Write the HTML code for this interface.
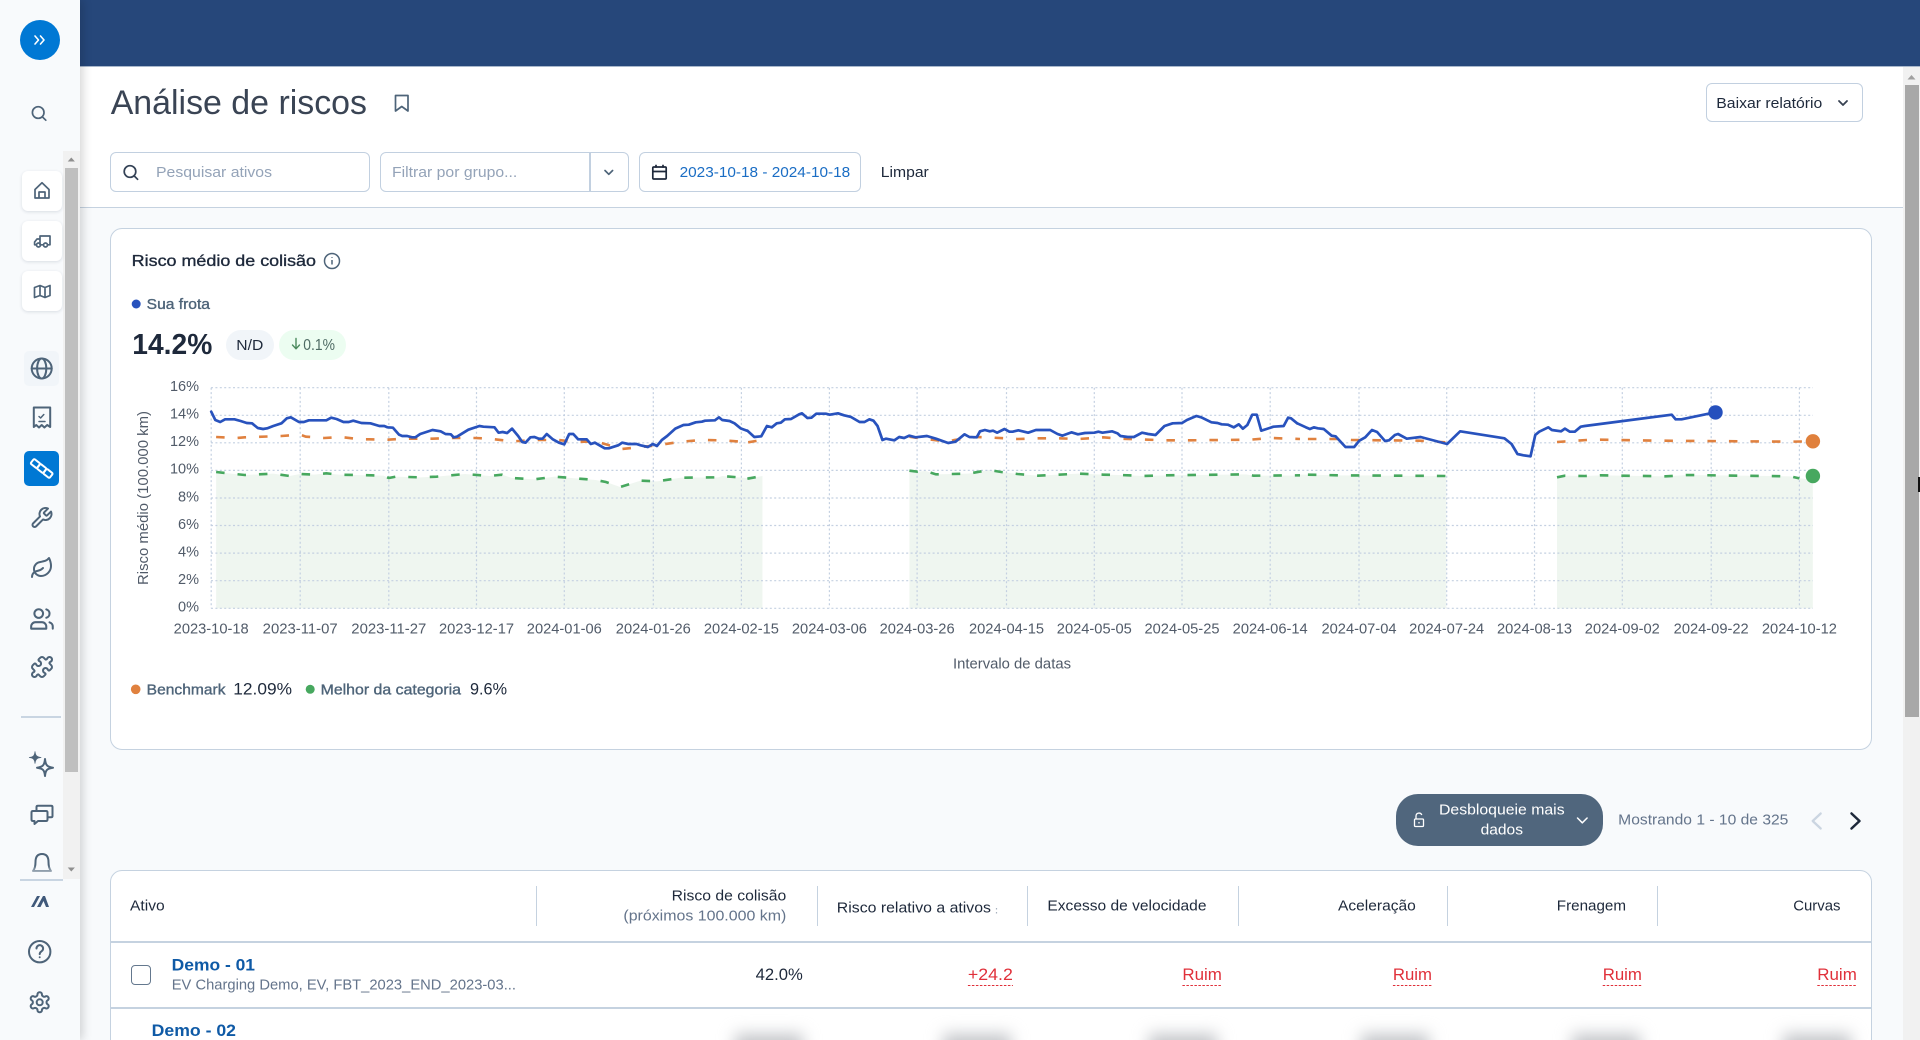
<!DOCTYPE html>
<html lang="pt"><head><meta charset="utf-8"><title>Análise de riscos</title>
<style>
html,body{margin:0;padding:0;width:1920px;height:1040px;overflow:hidden;background:#f8fafc;font-family:"Liberation Sans",sans-serif}
#w{position:relative;width:1920px;height:1040px;overflow:hidden;background:#f8fafc}
.b{position:absolute;box-sizing:border-box}
svg{position:absolute;left:0;top:0}
text{font-family:"Liberation Sans",sans-serif;font-size:15px;fill:#1e293b}
.m{stroke:currentColor;stroke-width:.35px}
.s{fill:none;stroke:#4e6479;stroke-width:1.7;stroke-linecap:round;stroke-linejoin:round}
.z{vector-effect:non-scaling-stroke}
.ax{font-size:14.5px;fill:#515b69}
.lb{fill:#64748b}
.r{fill:#e0303a;font-size:17px}
.g{fill:none;stroke:#c4d0e1;stroke-width:1.2;stroke-dasharray:2 2.4}
.bl{fill:none;stroke:#2852bd;stroke-width:2.7;stroke-linejoin:round;stroke-linecap:round}
.or{fill:none;stroke:#e0813f;stroke-width:2.6;stroke-dasharray:8.5 13}
.gr{fill:none;stroke:#47a85f;stroke-width:2.6;stroke-dasharray:8.5 13}
.fl{fill:#eff6f0;stroke:none}
</style></head><body>
<div id="w">
<div class="b" style="left:80px;top:0;width:1840px;height:67px;background:#26477a;border-bottom:1px solid #a9b8cc"></div>
<div class="b" style="left:80px;top:67px;width:1824px;height:141px;background:#fff;border-bottom:1.5px solid #c5d2e0"></div>
<div class="b" style="left:1903px;top:67px;width:17px;height:973px;background:#f1f1f1"></div>
<div class="b" style="left:1905px;top:85px;width:13.5px;height:632px;background:#a8a8a8"></div>
<div class="b" style="left:1918px;top:477px;width:2px;height:15px;background:#111"></div>
<div class="b" style="left:110px;top:152px;width:260px;height:40px;background:#fff;border:1.5px solid #c2d0e0;border-radius:6px"></div>
<div class="b" style="left:380px;top:152px;width:249px;height:40px;background:#fff;border:1.5px solid #c2d0e0;border-radius:6px"></div>
<div class="b" style="left:589px;top:153px;width:1.5px;height:38px;background:#c2d0e0"></div>
<div class="b" style="left:639px;top:152px;width:222px;height:40px;background:#fff;border:1.5px solid #c2d0e0;border-radius:6px"></div>
<div class="b" style="left:1706px;top:83px;width:157px;height:39px;background:#fff;border:1.5px solid #c2d0e0;border-radius:6px"></div>
<div class="b" style="left:110px;top:228px;width:1762px;height:522px;background:#fff;border:1.5px solid #c5d2e0;border-radius:12px"></div>
<div class="b" style="left:226px;top:330px;width:48px;height:30px;background:#f1f5f9;border-radius:15px"></div>
<div class="b" style="left:279px;top:330px;width:67px;height:30px;background:#ecfdf1;border-radius:15px"></div>
<div class="b" style="left:1396px;top:794px;width:207px;height:52px;background:#50667d;border-radius:22px"></div>
<div class="b" style="left:110px;top:870px;width:1762px;height:200px;background:#fff;border:1.5px solid #c5d2e0;border-radius:12px"></div>
<div class="b" style="left:111px;top:941px;width:1760px;height:1.5px;background:#c5d2e0"></div>
<div class="b" style="left:111px;top:1007px;width:1760px;height:1.5px;background:#c5d2e0"></div>
<div class="b" style="left:536px;top:886px;width:1px;height:40px;background:#c5d2e0"></div>
<div class="b" style="left:817px;top:886px;width:1px;height:40px;background:#c5d2e0"></div>
<div class="b" style="left:1027px;top:886px;width:1px;height:40px;background:#c5d2e0"></div>
<div class="b" style="left:1238px;top:886px;width:1px;height:40px;background:#c5d2e0"></div>
<div class="b" style="left:1447px;top:886px;width:1px;height:40px;background:#c5d2e0"></div>
<div class="b" style="left:1657px;top:886px;width:1px;height:40px;background:#c5d2e0"></div>
<div class="b" style="left:131px;top:965px;width:20px;height:20px;background:#fff;border:1.2px solid #64788e;border-radius:4px"></div>
<div class="b" style="left:735px;top:1034px;width:68px;height:30px;background:#c3c5c9;filter:blur(8px)"></div>
<div class="b" style="left:943px;top:1034px;width:68px;height:30px;background:#c3c5c9;filter:blur(8px)"></div>
<div class="b" style="left:1149px;top:1034px;width:68px;height:30px;background:#c3c5c9;filter:blur(8px)"></div>
<div class="b" style="left:1361px;top:1034px;width:68px;height:30px;background:#c3c5c9;filter:blur(8px)"></div>
<div class="b" style="left:1572px;top:1034px;width:68px;height:30px;background:#c3c5c9;filter:blur(8px)"></div>
<div class="b" style="left:1783px;top:1034px;width:68px;height:30px;background:#c3c5c9;filter:blur(8px)"></div>

<div class="b" style="left:0;top:0;width:80px;height:1040px;background:#f8fafc;box-shadow:3px 0 9px rgba(0,0,0,.16)"></div>
<div class="b" style="left:63px;top:151px;width:17px;height:728px;background:#f1f1f1"></div>
<div class="b" style="left:65px;top:168px;width:13px;height:604px;background:#bfbfbf"></div>
<div class="b" style="left:22px;top:171px;width:40px;height:40px;background:#fff;border-radius:6px;box-shadow:0 1px 3px rgba(30,50,80,.14)"></div>
<div class="b" style="left:22px;top:221px;width:40px;height:40px;background:#fff;border-radius:6px;box-shadow:0 1px 3px rgba(30,50,80,.14)"></div>
<div class="b" style="left:22px;top:271px;width:40px;height:40px;background:#fff;border-radius:6px;box-shadow:0 1px 3px rgba(30,50,80,.14)"></div>
<div class="b" style="left:24px;top:351px;width:35px;height:35px;background:#f1f5f9;border-radius:5px"></div>
<div class="b" style="left:24px;top:451px;width:35px;height:35px;background:#0078d4;border-radius:5px"></div>
<div class="b" style="left:21px;top:716px;width:40px;height:1.5px;background:#c9d5e2"></div>
<div class="b" style="left:20px;top:879px;width:43px;height:1.5px;background:#c9d5e2"></div>

<svg width="1920" height="1040" viewBox="0 0 1920 1040" xmlns="http://www.w3.org/2000/svg">
<defs><linearGradient id="f" x1="0" y1="0" x2="0" y2="1"><stop offset="0" stop-color="#f8fafc" stop-opacity="0"/><stop offset="1" stop-color="#f8fafc"/></linearGradient></defs>

<!-- sidebar -->
<circle cx="40" cy="40" r="20" fill="#0078d4"/>
<path d="M35 36l3.5 4-3.5 4M40.5 36l3.500 4-3.500 4" fill="none" stroke="#fff" stroke-width="1.600" stroke-linecap="round" stroke-linejoin="round"/>
<g class="s"><circle cx="38.200" cy="112.500" r="5.800"/><path d="M42.500 117l3.300 3.200"/></g>
<path d="M71.300 157.500l3.600 4h-7.200zM71.300 871.500l3.600-4h-7.200z" fill="#8f8f8f"/>
<g class="s">
<path d="M35 189.500L42 182.800l7 6.700V198H35zM39 198v-6h6v6"/>
<path d="M40 236h10v8.800h-2M43 244.800h-1.500M40 236v8.800M40 239h-3l-2.400 3v2.800H36"/><circle cx="38.500" cy="245" r="2"/><circle cx="45.500" cy="245" r="2"/>
<path d="M34.500 287.500l5.500-2 5 2 5-2v10l-5 2-5-2-5.500 2zM40 285.500v10M45 287.500v10"/>
</g>
<g class="s" style="stroke-width:2">
<circle cx="41.700" cy="368.500" r="10"/><ellipse cx="41.700" cy="368.500" rx="4.600" ry="10"/><path d="M31.700 368.500h20"/>
<path d="M33.800 407.500h16.400V427l-3-2-2.800 2.500-2.700-2.500-2.700 2.500-2.800-2.500-2.400 2z"/>
<path d="M39 416.500l1.600 1.500 3.200-3.500M39 421.500h6" style="stroke-width:1.500"/>
<g transform="translate(29.500 506)"><path d="M14.700 6.300a1 1 0 0 0 0 1.400l1.600 1.600a1 1 0 0 0 1.400 0l3.770-3.770a6 6 0 0 1-7.940 7.940l-6.910 6.910a2.120 2.120 0 0 1-3-3l6.910-6.910a6 6 0 0 1 7.940-7.940l-3.760 3.760z"/></g>
<g transform="translate(30 556)"><path d="M11 20A7 7 0 0 1 9.800 6.100C15.500 5 17 4.480 19 2c1 2 2 4.180 2 8 0 5.500-4.780 10-10 10Z"/><path d="M2 21c0-3 1.850-5.360 5.080-6C9.500 14.520 12 13 13 12"/></g>
<g transform="translate(29 606) scale(1.08)" style="stroke-width:1.900"><path d="M16 21v-2a4 4 0 0 0-4-4H6a4 4 0 0 0-4 4v2H16"/><circle cx="9" cy="7" r="4"/><path d="M22 21v-2a4 4 0 0 0-3-3.870"/><path d="M16 3.130a4 4 0 0 1 0 7.750"/></g>
<g transform="translate(30 655)"><path d="M19.439 7.850c-.049.322.059.648.289.878l1.568 1.568c.47.47.706 1.087.706 1.704s-.235 1.233-.706 1.704l-1.611 1.611a.98.98 0 0 1-.837.276c-.47-.07-.802-.48-.968-.925a2.501 2.501 0 1 0-3.214 3.214c.446.166.855.497.925.968a.979.979 0 0 1-.276.837l-1.610 1.610a2.404 2.404 0 0 1-1.705.707 2.402 2.402 0 0 1-1.704-.706l-1.568-1.568a1.026 1.026 0 0 0-.877-.29c-.493.074-.84.504-1.020.968a2.500 2.500 0 1 1-3.237-3.237c.464-.18.894-.527.967-1.020a1.026 1.026 0 0 0-.289-.877l-1.568-1.568A2.402 2.402 0 0 1 1.998 12c0-.617.236-1.234.706-1.704L4.230 8.770c.24-.24.581-.353.917-.303.515.077.877.528 1.073 1.010a2.500 2.500 0 1 0 3.259-3.259c-.482-.196-.933-.558-1.010-1.073-.05-.336.062-.676.303-.917l1.525-1.525A2.402 2.402 0 0 1 12 1.998c.617 0 1.234.236 1.704.706l1.568 1.568c.23.23.556.338.877.29.493-.074.84-.504 1.020-.968a2.500 2.500 0 1 1 3.237 3.237c-.464.18-.894.527-.967 1.020Z"/></g>
<path d="M45 759C45.500 765 47 767 53 767.700 47 768.500 45.500 770 45 776 44.500 770 43 768.500 37 767.700 43 767 44.500 765 45 759Z"/>
<path d="M33 811h13q1.500 0 1.500 1.500v7q0 1.500-1.500 1.500h-8l-3.500 3v-3H33q-1.500 0-1.500-1.500v-7q0-1.500 1.500-1.500z"/>
<path d="M36.500 811v-4q0-1.200 1.500-1.200h13q1.500 0 1.500 1.200v9q0 1.300-1.500 1.300h-3.500"/>
<path d="M33 871q2.500-3 2.500-9 0-8 6.500-8t6.500 8q0 6 2.500 9z"/>
<circle cx="39.700" cy="951.700" r="10.700"/>
<path d="M36.500 948.500a3.300 3.300 0 1 1 5 2.800c-1.200.8-1.800 1.400-1.800 2.800M39.700 957.200v.1"/>
<g transform="translate(27.700 990.300)"><path d="M12.220 2h-.44a2 2 0 0 0-2 2v.18a2 2 0 0 1-1 1.730l-.43.25a2 2 0 0 1-2 0l-.15-.08a2 2 0 0 0-2.730.73l-.22.38a2 2 0 0 0 .73 2.730l.15.1a2 2 0 0 1 1 1.720v.51a2 2 0 0 1-1 1.740l-.15.09a2 2 0 0 0-.73 2.730l.22.38a2 2 0 0 0 2.730.73l.15-.08a2 2 0 0 1 2 0l.43.25a2 2 0 0 1 1 1.730V20a2 2 0 0 0 2 2h.44a2 2 0 0 0 2-2v-.18a2 2 0 0 1 1-1.730l.43-.25a2 2 0 0 1 2 0l.15.08a2 2 0 0 0 2.730-.73l.22-.39a2 2 0 0 0-.73-2.730l-.15-.08a2 2 0 0 1-1-1.740v-.5a2 2 0 0 1 1-1.740l.15-.09a2 2 0 0 0 .73-2.730l-.22-.38a2 2 0 0 0-2.730-.73l-.15.08a2 2 0 0 1-2 0l-.43-.25a2 2 0 0 1-1-1.730V4a2 2 0 0 0-2-2z"/><circle cx="12" cy="12" r="3"/></g>
</g>
<path d="M35 751.700C35.400 755.500 36.500 757 41 757.500 36.500 758 35.400 759.500 35 763.300 34.600 759.500 33.500 758 29.300 757.500 33.500 757 34.600 755.500 35 751.700Z" fill="#4e6479" stroke="#4e6479" stroke-width=".8" stroke-linejoin="round"/>
<g transform="translate(41.700 468.500) rotate(38)" fill="none" stroke="#fff" stroke-width="2" stroke-linejoin="round"><rect x="-12" y="-3" width="8" height="6" rx="1.200"/><rect x="-4" y="-3" width="8" height="6" rx="1.200"/><rect x="4" y="-3" width="8" height="6" rx="1.200"/></g>
<path d="M31 907l6-11h3l-6 11zM37 907l6-11h2l4 11h-3l-2.500-6-3 6z" fill="#40597a"/>
<rect x="20" y="865" width="43" height="14" fill="url(#f)"/>

<!-- header -->
<text x="110.700" y="114" textLength="256.300" lengthAdjust="spacingAndGlyphs" style="font-size:34px;fill:#3a4454">Análise de riscos</text>
<path d="M395.500 95.500h12.500v15.500l-6.250-4.500-6.250 4.500z" class="s"/>
<text x="1716.300" y="108" textLength="106" lengthAdjust="spacingAndGlyphs" style="font-size:15px">Baixar relatório</text>
<path d="M1839 101l4 4 4-4" fill="none" stroke="#374151" stroke-width="1.800" stroke-linecap="round" stroke-linejoin="round"/>
<path d="M1907.500 79.500l4-4.500 4 4.500z" fill="#a0a0a0"/>
<g class="s" style="stroke:#334155"><circle cx="130" cy="171.500" r="5.800"/><path d="M134.300 176l3.300 3.300"/></g>
<text x="156" y="176.800" textLength="116" lengthAdjust="spacingAndGlyphs" style="fill:#94a3b8">Pesquisar ativos</text>
<text x="392" y="176.800" textLength="125.300" lengthAdjust="spacingAndGlyphs" style="fill:#94a3b8">Filtrar por grupo...</text>
<path d="M605 170.500l3.800 3.800 3.800-3.800" fill="none" stroke="#4e6479" stroke-width="1.700" stroke-linecap="round" stroke-linejoin="round"/>
<g fill="none" stroke="#1e293b" stroke-width="1.700"><rect x="652.800" y="167" width="13.400" height="12" rx="1"/><path d="M652.800 171.500h13.400M656 164.800v3M663 164.800v3"/></g>
<text x="679.600" y="176.800" textLength="170.600" lengthAdjust="spacingAndGlyphs" style="fill:#1a6dc4">2023-10-18 - 2024-10-18</text>
<text x="880.800" y="176.800" textLength="48" lengthAdjust="spacingAndGlyphs">Limpar</text>

<!-- card title -->
<text x="131.700" y="266.200" textLength="184.300" lengthAdjust="spacingAndGlyphs" class="m" style="font-size:16px;color:#1e293b">Risco médio de colisão</text>
<g fill="none" stroke="#4e6479" stroke-width="1.500"><circle cx="332" cy="261" r="7.500"/><path d="M332 260v4.500M332 257.200v.8"/></g>
<circle cx="136.200" cy="304" r="4.500" fill="#2852bd"/>
<text x="146.700" y="308.800" textLength="63.300" lengthAdjust="spacingAndGlyphs" class="m" style="font-size:14.500px;fill:#4e6479;color:#4e6479">Sua frota</text>
<text x="132.300" y="354" textLength="80" lengthAdjust="spacingAndGlyphs" style="font-size:29px;font-weight:bold;fill:#1e293b">14.2%</text>
<text x="236.300" y="350" textLength="27" lengthAdjust="spacingAndGlyphs" style="font-size:15px">N/D</text>
<path d="M296 338.500v10M292.500 345l3.500 3.800 3.500-3.800" fill="none" stroke="#4b8a5d" stroke-width="1.400" stroke-linecap="round" stroke-linejoin="round"/>
<text x="303.300" y="350" textLength="31.700" lengthAdjust="spacingAndGlyphs" style="font-size:16px;fill:#4e6b64">0.1%</text>

<!-- fill -->
<g transform="translate(110 360) scale(.40816 .33333)">
<polygon class="fl" points="260,745 260,336 290,340 330,345 400,341 440,348 466,342 500,344 530,340 560,344 640,346 670,347 683,354 700,350 760,352 800,350 870,342 930,348 960,344 985,354 1040,358 1090,350 1130,354 1190,360 1215,366 1250,381 1300,362 1340,364 1400,353 1490,352 1500,348 1568,355 1568,745"/>
</g>
<g transform="translate(740 370) scale(.40816 .33333)">
<polygon class="fl" points="0,715 0,324 18,326 55,318 55,715"/>
<polygon class="fl" points="415,715 415,302 435,305 455,303 480,313 560,311 610,300 640,306 680,312 730,317 830,311 890,314 930,315 990,318 1040,316 1240,313 1258,317 1568,316 1568,715"/>
</g>
<g transform="translate(1300 370) scale(.39541 .33333)">
<polygon class="fl" points="0,715 0,314 20,314 100,316 370,318 370,715"/>
<polygon class="fl" points="650,715 650,322 670,317 720,318 760,316 925,319 980,315 1240,319 1263,325 1297,328 1297,715"/>
</g>

<!-- grid -->
<g class="g">
<path d="M211 387.700H1813M211 415.300H1813M211 442.800H1813M211 470.400H1813M211 498H1813M211 525.500H1813M211 553.100H1813M211 580.700H1813M211 608.300H1813"/>
<path d="M211.200 387.700V608.300M300.200 387.700V608.300M388.800 387.700V608.300M476.500 387.700V608.300M564.300 387.700V608.300M653.300 387.700V608.300M741.400 387.700V608.300M829.400 387.700V608.300M917.100 387.700V608.300M1006.500 387.700V608.300M1094.300 387.700V608.300M1182 387.700V608.300M1270.200 387.700V608.300M1359 387.700V608.300M1446.700 387.700V608.300M1534.500 387.700V608.300M1622.300 387.700V608.300M1711.200 387.700V608.300M1799.400 387.700V608.300"/>
</g>

<!-- axis labels -->
<g class="ax" text-anchor="end">
<text class="ax" x="199" y="391">16%</text><text class="ax" x="199" y="418.600">14%</text><text class="ax" x="199" y="446.100">12%</text><text class="ax" x="199" y="473.700">10%</text><text class="ax" x="199" y="501.300">8%</text><text class="ax" x="199" y="528.800">6%</text><text class="ax" x="199" y="556.400">4%</text><text class="ax" x="199" y="584">2%</text><text class="ax" x="199" y="611.500">0%</text>
</g>
<text class="ax" transform="translate(148 585) rotate(-90)" x="0" y="0" textLength="174" lengthAdjust="spacingAndGlyphs">Risco médio (100.000 km)</text>
<g text-anchor="middle">
<text class="ax" x="211.200" y="633.300" textLength="75" lengthAdjust="spacingAndGlyphs">2023-10-18</text>
<text class="ax" x="300.200" y="633.300" textLength="75" lengthAdjust="spacingAndGlyphs">2023-11-07</text>
<text class="ax" x="388.800" y="633.300" textLength="75" lengthAdjust="spacingAndGlyphs">2023-11-27</text>
<text class="ax" x="476.500" y="633.300" textLength="75" lengthAdjust="spacingAndGlyphs">2023-12-17</text>
<text class="ax" x="564.300" y="633.300" textLength="75" lengthAdjust="spacingAndGlyphs">2024-01-06</text>
<text class="ax" x="653.300" y="633.300" textLength="75" lengthAdjust="spacingAndGlyphs">2024-01-26</text>
<text class="ax" x="741.400" y="633.300" textLength="75" lengthAdjust="spacingAndGlyphs">2024-02-15</text>
<text class="ax" x="829.400" y="633.300" textLength="75" lengthAdjust="spacingAndGlyphs">2024-03-06</text>
<text class="ax" x="917.100" y="633.300" textLength="75" lengthAdjust="spacingAndGlyphs">2024-03-26</text>
<text class="ax" x="1006.500" y="633.300" textLength="75" lengthAdjust="spacingAndGlyphs">2024-04-15</text>
<text class="ax" x="1094.300" y="633.300" textLength="75" lengthAdjust="spacingAndGlyphs">2024-05-05</text>
<text class="ax" x="1182" y="633.300" textLength="75" lengthAdjust="spacingAndGlyphs">2024-05-25</text>
<text class="ax" x="1270.200" y="633.300" textLength="75" lengthAdjust="spacingAndGlyphs">2024-06-14</text>
<text class="ax" x="1359" y="633.300" textLength="75" lengthAdjust="spacingAndGlyphs">2024-07-04</text>
<text class="ax" x="1446.700" y="633.300" textLength="75" lengthAdjust="spacingAndGlyphs">2024-07-24</text>
<text class="ax" x="1534.500" y="633.300" textLength="75" lengthAdjust="spacingAndGlyphs">2024-08-13</text>
<text class="ax" x="1622.300" y="633.300" textLength="75" lengthAdjust="spacingAndGlyphs">2024-09-02</text>
<text class="ax" x="1711.200" y="633.300" textLength="75" lengthAdjust="spacingAndGlyphs">2024-09-22</text>
<text class="ax" x="1799.400" y="633.300" textLength="75" lengthAdjust="spacingAndGlyphs">2024-10-12</text>
<text class="ax" x="1012" y="668.500" textLength="118" lengthAdjust="spacingAndGlyphs">Intervalo de datas</text>
</g>

<!-- series: segments in crop coordinates -->
<g transform="translate(110 360) scale(.40816 .33333)" fill="none">
<polyline class="z gr" points="260,336 290,340 330,345 400,341 440,348 466,342 500,344 530,340 560,344 640,346 670,347 683,354 700,350 760,352 800,350 870,342 930,348 960,344 985,354 1040,358 1090,350 1130,354 1190,360 1215,366 1250,381 1300,362 1340,364 1400,353 1490,352 1500,348 1568,355"/>
<polyline class="z or" points="260,231 310,234 330,232 420,228 466,224 480,230 525,234 565,231 615,238 635,238 680,239 725,236 790,236 835,234 895,234 930,236 985,244 1050,240 1100,240 1140,246 1190,244 1255,267 1300,261 1340,256 1400,245 1450,240 1500,241 1568,247"/>
<polyline class="z bl" points="248,155 258,180 270,186 282,178 305,178 320,183 335,189 348,190 362,204 375,207 385,205 400,198 420,190 433,175 443,172 463,186 475,186 487,181 530,181 542,173 555,177 572,186 585,186 596,182 616,189 638,190 660,198 672,198 680,202 693,203 708,224 716,228 728,228 740,232 748,232 760,222 775,216 790,210 810,214 822,222 835,223 842,232 850,230 878,209 905,198 915,200 942,202 952,218 962,216 973,219 985,206 1000,228 1010,246 1018,248 1030,232 1040,231 1050,236 1060,236 1070,222 1085,238 1100,248 1113,253 1125,222 1135,222 1147,238 1168,238 1178,252 1188,248 1212,265 1222,265 1245,256 1255,248 1270,252 1290,252 1300,256 1318,261 1330,252 1340,258 1352,240 1365,228 1385,206 1405,195 1418,194 1435,187 1450,185 1458,182 1482,181 1492,172 1500,180 1518,183 1530,190 1545,205 1560,212"/>
</g>
<g transform="translate(740 370) scale(.40816 .33333)" fill="none">
<polyline class="z gr" points="18,326 55,318"/>
<polyline class="z gr" points="415,302 435,305 455,303 480,313 560,311 610,300 640,306 680,312 730,317 830,311 890,314 930,315 990,318 1040,316 1240,313 1258,317 1372,316"/>
<polyline class="z or" points="20,217 53,210"/>
<polyline class="z or" points="415,200 435,204 510,215 525,210 580,201 620,203 680,207 730,205 780,205 830,207 890,202 930,206 980,208 1040,211 1100,211 1250,209 1300,204 1372,207"/>
<polyline class="z bl" points="18,182 35,201 52,199 66,168 78,172 90,160 100,158 110,148 125,147 145,133 152,130 165,144 175,143 187,131 210,131 220,134 240,130 255,136 272,141 293,156 305,156 317,148 327,152 337,168 349,210 358,206 378,211 390,201 402,204 415,197 430,202 458,198 480,206 510,219 528,215 550,193 562,201 580,202 588,184 600,180 612,184 620,182 630,188 648,177 660,185 668,185 682,181 706,188 725,180 760,180 778,192 790,197 812,187 828,193 845,189 868,188 878,185 888,188 912,184 925,190 932,198 950,201 965,201 985,188 1000,192 1018,195 1040,168 1060,160 1083,159 1095,150 1118,138 1130,142 1155,157 1170,159 1180,163 1195,164 1210,172 1222,163 1232,176 1243,165 1255,134 1266,134 1277,182 1290,177 1307,170 1332,168 1343,143 1350,145 1365,160"/>
</g>
<g transform="translate(1300 370) scale(.39541 .33333)" fill="none">
<polyline class="z gr" points="20,314 100,316 370,318"/>
<polyline class="z gr" points="650,322 670,317 720,318 760,316 925,319 980,315 1240,319 1263,325"/>
<polyline class="z or" points="20,207 100,207 130,210 300,212 370,217"/>
<polyline class="z or" points="650,216 725,210 760,209 900,212 1240,215 1297,214"/>
<polyline class="z bl" points="-7,160 15,172 25,177 35,172 45,175 60,177 80,197 90,199 115,231 137,231 150,212 165,202 182,180 195,186 215,213 225,211 240,195 248,192 270,206 305,201 372,222 405,184 517,205 535,222 550,252 565,256 583,259 595,195 605,185 628,172 637,180 660,184 670,176 682,185 695,185 710,170 720,168 940,134 950,148 965,148 1050,127"/>
</g>
<circle cx="1715.500" cy="412.400" r="7.200" fill="#2550bd"/>
<circle cx="1812.900" cy="441.300" r="7.200" fill="#e0803c"/>
<circle cx="1812.900" cy="476" r="7.200" fill="#47a85f"/>

<!-- legend -->
<circle cx="135.700" cy="689.300" r="4.800" fill="#e0813f"/>
<text x="146.700" y="694.500" textLength="78.800" lengthAdjust="spacingAndGlyphs" class="m" style="font-size:14.500px;fill:#4e6479;color:#4e6479">Benchmark</text>
<text x="233.300" y="694.500" textLength="58.700" lengthAdjust="spacingAndGlyphs" style="font-size:16.500px">12.09%</text>
<circle cx="310.200" cy="689.300" r="4.500" fill="#47a85f"/>
<text x="320.600" y="694.500" textLength="140.400" lengthAdjust="spacingAndGlyphs" class="m" style="font-size:14.500px;fill:#4e6479;color:#4e6479">Melhor da categoria</text>
<text x="470" y="694.500" textLength="37" lengthAdjust="spacingAndGlyphs" style="font-size:16.500px">9.6%</text>

<!-- pagination -->
<g fill="none" stroke="#fff" stroke-width="1.300"><rect x="1414.500" y="819" width="9" height="7.500" rx="1"/><path d="M1416 819v-3a3 3 0 0 1 5.800-1M1419 822v1.500"/></g>
<text x="1439" y="814.500" textLength="125.600" lengthAdjust="spacingAndGlyphs" style="fill:#fff;font-size:15px">Desbloqueie mais</text>
<text x="1480.600" y="834.500" textLength="42.400" lengthAdjust="spacingAndGlyphs" style="fill:#fff;font-size:15px">dados</text>
<path d="M1577.500 818l4.800 4.800 4.800-4.800" fill="none" stroke="#fff" stroke-width="1.500" stroke-linecap="round" stroke-linejoin="round"/>
<text x="1618.200" y="824.500" textLength="170.200" lengthAdjust="spacingAndGlyphs" class="lb">Mostrando 1 - 10 de 325</text>
<path d="M1820.700 813.500l-8 7.500 8 7.500" fill="none" stroke="#cbd5e1" stroke-width="2.300" stroke-linecap="round" stroke-linejoin="round"/>
<path d="M1851.500 813.500l8 7.500-8 7.500" fill="none" stroke="#1e293b" stroke-width="2.500" stroke-linecap="round" stroke-linejoin="round"/>

<!-- table -->
<text x="130" y="910.500" textLength="34.700" lengthAdjust="spacingAndGlyphs" style="font-size:15px">Ativo</text>
<text x="671.700" y="900.500" textLength="114.600" lengthAdjust="spacingAndGlyphs">Risco de colisão</text>
<text x="623.400" y="920.500" textLength="162.900" lengthAdjust="spacingAndGlyphs" class="lb">(próximos 100.000 km)</text>
<text x="836.800" y="912.500" textLength="154.200" lengthAdjust="spacingAndGlyphs">Risco relativo a ativos</text>
<path d="M996.500 908v1.500M996.500 912v1.500" stroke="#a8b2bf" stroke-width="1.200"/>
<text x="1047.400" y="910.500" textLength="159.100" lengthAdjust="spacingAndGlyphs">Excesso de velocidade</text>
<text x="1338" y="910.500" textLength="77.800" lengthAdjust="spacingAndGlyphs">Aceleração</text>
<text x="1556.800" y="910.500" textLength="69.200" lengthAdjust="spacingAndGlyphs">Frenagem</text>
<text x="1793.200" y="910.500" textLength="47.300" lengthAdjust="spacingAndGlyphs">Curvas</text>

<text x="171.700" y="970.300" textLength="83.300" lengthAdjust="spacingAndGlyphs" style="font-size:16.500px;font-weight:bold;fill:#0f5aa6">Demo - 01</text>
<text x="171.700" y="989.500" textLength="344.300" lengthAdjust="spacingAndGlyphs" class="lb">EV Charging Demo, EV, FBT_2023_END_2023-03...</text>
<text x="755.600" y="980" textLength="47.200" lengthAdjust="spacingAndGlyphs" style="font-size:16.500px">42.0%</text>
<text class="r" x="967.900" y="980" textLength="45" lengthAdjust="spacingAndGlyphs">+24.2</text>
<text class="r" x="1182.400" y="980" textLength="39.500" lengthAdjust="spacingAndGlyphs">Ruim</text>
<text class="r" x="1392.900" y="980" textLength="39.100" lengthAdjust="spacingAndGlyphs">Ruim</text>
<text class="r" x="1602.700" y="980" textLength="39.200" lengthAdjust="spacingAndGlyphs">Ruim</text>
<text class="r" x="1817.300" y="980" textLength="39.500" lengthAdjust="spacingAndGlyphs">Ruim</text>
<path d="M967.900 985.500h45M1182.400 985.500h39.500M1392.900 985.500h39.100M1602.700 985.500h39.200M1817.300 985.500h39.500" stroke="#e0303a" stroke-width="1" stroke-dasharray="2.500 1.500" fill="none"/>
<text x="151.700" y="1036" textLength="84.300" lengthAdjust="spacingAndGlyphs" style="font-size:16.500px;font-weight:bold;fill:#0f5aa6">Demo - 02</text>
</svg>
</div>
</body></html>
